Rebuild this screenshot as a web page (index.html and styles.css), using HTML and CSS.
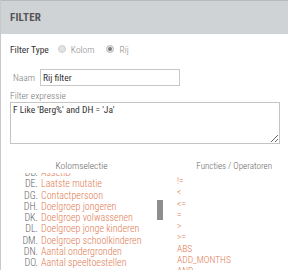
FILE: index.html
```html
<!DOCTYPE html>
<html lang="nl">
<head>
  <meta charset="UTF-8" />
  <title>Filter</title>
  <link rel="stylesheet" href="styles.css">
</head>
<body>
  <div class="panel">
    <div class="panel-head">FILTER</div>
    <div class="panel-body">
      <div class="type-row">
        <span class="type-label">Filter Type</span>
        <label class="radio"><span class="dot"></span>Kolom</label>
        <label class="radio"><span class="dot checked"></span>Rij</label>
      </div>

      <div class="name-row">
        <span class="name-label">Naam</span>
        <input type="text" class="name-input" value="Rij filter">
      </div>

      <div class="expr-label">Filter expressie</div>
      <textarea class="expr-input">F Like 'Berg%' and DH = 'Ja'</textarea>

      <div class="pickers">
        <div class="pick-title col-title">Kolomselectie</div>
        <div class="pick-title fn-title">Functies / Operatoren</div>

        <div class="col-view">
          <ul class="col-list">
            <li><span class="code">DD.</span><span class="name">AssetID</span></li>
            <li><span class="code">DE.</span><span class="name">Laatste mutatie</span></li>
            <li><span class="code">DG.</span><span class="name">Contactpersoon</span></li>
            <li><span class="code">DH.</span><span class="name">Doelgroep jongeren</span></li>
            <li><span class="code">DK.</span><span class="name">Doelgroep volwassenen</span></li>
            <li><span class="code">DL.</span><span class="name">Doelgroep jonge kinderen</span></li>
            <li><span class="code">DM.</span><span class="name">Doelgroep schoolkinderen</span></li>
            <li><span class="code">DN.</span><span class="name">Aantal ondergronden</span></li>
            <li><span class="code">DO.</span><span class="name">Aantal speeltoestellen</span></li>
          </ul>
          <div class="track"><div class="thumb"></div></div>
        </div>

        <div class="fn-view">
          <ul class="fn-list">
            <li>!=</li>
            <li>&lt;</li>
            <li>&lt;=</li>
            <li>=</li>
            <li>&gt;</li>
            <li>&gt;=</li>
            <li>ABS</li>
            <li>ADD_MONTHS</li>
            <li>AND</li>
          </ul>
        </div>
      </div>
    </div>
  </div>
</body>
</html>
```

FILE: styles.css
```css
body {
  margin: 0;
  width: 288px;
  height: 270px;
  overflow: hidden;
  background-color: #fff;
  font-family: "Roboto Condensed", Roboto, sans-serif;
  font-weight: 300;
  color: #555;
}
.panel {
  height: 270px;
  border-left: 1px solid #c9c9c9;
  overflow: hidden;
}
.panel-head {
  height: 33px;
  line-height: 34px;
  background-color: #cfd3d6;
  border-top: 1px solid #b7bbbe;
  padding-left: 9px;
  font-size: 11px;
  font-weight: bold;
  color: #555;
  letter-spacing: 0.2px;
}
.panel-body {
  padding: 0 0 0 9px;
}
.type-row {
  display: flex;
  align-items: center;
  height: 12px;
  margin-top: 9px;
  font-size: 9.5px;
}
.type-label {
  color: #333;
  font-weight: 400;
  margin-right: 9px;
}
.radio {
  display: flex;
  align-items: center;
  color: #888;
  margin-right: 12px;
}
.dot {
  width: 6px;
  height: 6px;
  border-radius: 50%;
  border: 1px solid #cfcfcf;
  background-color: #e2e2e2;
  margin-right: 5px;
}
.dot.checked {
  background-color: #7a7a7a;
  box-shadow: inset 0 0 0 1px #eee;
}
.name-row {
  display: flex;
  align-items: center;
  margin-top: 14px;
  height: 17px;
  font-size: 9.5px;
}
.name-label {
  color: #777;
  width: 27px;
  padding-left: 3px;
}
.name-input {
  width: 134px;
  height: 13px;
  padding: 1px 2px;
  border: 1px solid #c8c8c8;
  font-family: inherit;
  font-weight: 400;
  font-size: 9.5px;
  color: #333;
  outline: none;
}
.expr-label {
  margin-top: 4px;
  font-size: 9.5px;
  line-height: 12px;
  color: #777;
}
.expr-input {
  display: block;
  width: 264px;
  height: 38px;
  margin: 0;
  padding: 1px 2px;
  border: 1px solid #c4c4c4;
  font-family: inherit;
  font-weight: 400;
  font-size: 9.5px;
  color: #333;
  resize: both;
}
.pickers {
  display: grid;
  grid-template-columns: 167px 1fr;
  margin-left: -9px;
  margin-top: 16px;
}
.pick-title {
  font-size: 9.5px;
  line-height: 12px;
  color: #666;
}
.col-title {
  text-align: center;
  padding-right: 6px;
}
.fn-title {
  text-align: right;
  padding-right: 16px;
  font-size: 9px;
}
.col-view {
  display: flex;
  height: 101px;
  margin-top: 1px;
  overflow: hidden;
}
.col-list {
  list-style: none;
  margin: -6px 0 0 0;
  padding: 0;
  width: 156px;
  font-size: 10px;
}
.col-list li,
.fn-list li {
  height: 11.3px;
  line-height: 11.3px;
  white-space: nowrap;
}
.code {
  display: inline-block;
  width: 37px;
  text-align: right;
  margin-right: 3px;
  color: #666;
}
.name {
  color: #e07a52;
}
.track {
  width: 6px;
}
.thumb {
  width: 6px;
  height: 20px;
  margin-top: 27px;
  background-color: #8e8e8e;
}
.fn-view {
  height: 101px;
  margin-top: 1px;
  overflow: hidden;
}
.fn-list {
  list-style: none;
  margin: 2px 0 0 9px;
  padding: 0;
  font-size: 9.5px;
  color: #e07a52;
}
```
